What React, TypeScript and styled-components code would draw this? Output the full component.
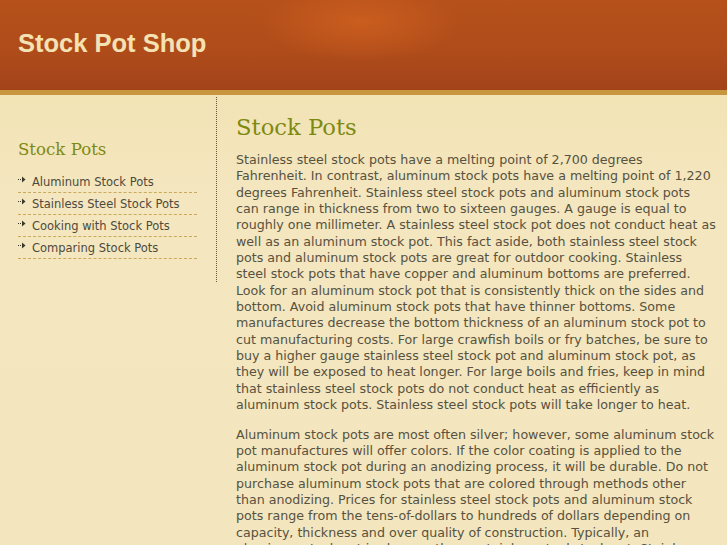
import React from "react";
import styled, { createGlobalStyle } from "styled-components";

const Global = createGlobalStyle`
  html, body { margin: 0; padding: 0; }
  body {
    background: linear-gradient(180deg, #ecd69a 0px, #f2e2b2 60px, #f4e6bf 200px, #f3e5bd 100%);
    font-family: "DejaVu Sans", Verdana, sans-serif;
    min-height: 545px;
  }
`;

const Header = styled.header`
  height: 90px;
  background:
    radial-gradient(ellipse 100px 40px at 360px 22px, rgba(210, 98, 32, 0.75), rgba(210, 98, 32, 0) 100%),
    linear-gradient(180deg, #b6511b 0%, #b04c1a 55%, #a2431a 100%);
  border-bottom: 5px solid #c7963e;
  display: flex;
  align-items: center;
  padding: 0 18px;
  box-sizing: content-box;
`;

const Title = styled.h1`
  margin: 0;
  margin-top: -4px;
  font-family: "Liberation Sans", Arial, sans-serif;
  font-weight: bold;
  font-size: 25.5px;
  color: #f4e2b4;
`;

const Layout = styled.div`
  display: grid;
  grid-template-columns: 217px 1fr;
  align-items: start;
`;

const Sidebar = styled.aside`
  border-right: 1px dotted #6a5a3a;
  padding: 43px 19px 0 18px;
  height: 142px;
  margin-top: 2px;
`;

const SideHeading = styled.h2`
  margin: 0 0 12px 0;
  font-family: "DejaVu Serif", serif;
  font-weight: normal;
  font-size: 16.6px;
  color: #7d8a12;
`;

const NavList = styled.ul`
  list-style: none;
  margin: 0;
  padding: 0;
`;

const NavItem = styled.li`
  display: flex;
  align-items: center;
  gap: 6px;
  height: 21px;
  border-bottom: 1px dashed #c9a95a;
  font-size: 11.5px;
  color: #4e4a3c;
`;

const Arrow = styled.svg`
  width: 8px;
  height: 7px;
  margin-top: -4px;
`;

const Main = styled.main`
  padding: 19px 11px 0 19px;
`;

const MainHeading = styled.h1`
  margin: 0 0 12px 0;
  font-family: "DejaVu Serif", serif;
  font-weight: normal;
  font-size: 22.7px;
  color: #7d8a12;
`;

const Para = styled.p`
  margin: 0 0 13px 0;
  font-size: 12.65px;
  line-height: 16.35px;
  color: #57523f;
`;

const links = [
  "Aluminum Stock Pots",
  "Stainless Steel Stock Pots",
  "Cooking with Stock Pots",
  "Comparing Stock Pots",
];

export default function App() {
  return (
    <>
      <Global />
      <Header>
        <Title>Stock Pot Shop</Title>
      </Header>
      <Layout>
        <Sidebar>
          <SideHeading>Stock Pots</SideHeading>
          <NavList>
            {links.map((l) => (
              <NavItem key={l}>
                <Arrow viewBox="0 0 8 7">
                  <path d="M0 3.5h5" stroke="#3a3a2a" strokeWidth="1" strokeDasharray="1 1" />
                  <path d="M4 0.5L7.5 3.5L4 6.5z" fill="#3a3a2a" />
                </Arrow>
                {l}
              </NavItem>
            ))}
          </NavList>
        </Sidebar>
        <Main>
          <MainHeading>Stock Pots</MainHeading>
          <Para>
            Stainless steel stock pots have a melting point of 2,700 degrees Fahrenheit. In contrast, aluminum stock pots have a melting point of 1,220 degrees Fahrenheit. Stainless steel stock pots and aluminum stock pots can range in thickness from two to sixteen gauges. A gauge is equal to roughly one millimeter. A stainless steel stock pot does not conduct heat as well as an aluminum stock pot. This fact aside, both stainless steel stock pots and aluminum stock pots are great for outdoor cooking. Stainless steel stock pots that have copper and aluminum bottoms are preferred. Look for an aluminum stock pot that is consistently thick on the sides and bottom. Avoid aluminum stock pots that have thinner bottoms. Some manufactures decrease the bottom thickness of an aluminum stock pot to cut manufacturing costs. For large crawfish boils or fry batches, be sure to buy a higher gauge stainless steel stock pot and aluminum stock pot, as they will be exposed to heat longer. For large boils and fries, keep in mind that stainless steel stock pots do not conduct heat as efficiently as aluminum stock pots. Stainless steel stock pots will take longer to heat.
          </Para>
          <Para>
            Aluminum stock pots are most often silver; however, some aluminum stock pot manufactures will offer colors. If the color coating is applied to the aluminum stock pot during an anodizing process, it will be durable. Do not purchase aluminum stock pots that are colored through methods other than anodizing. Prices for stainless steel stock pots and aluminum stock pots range from the tens-of-dollars to hundreds of dollars depending on capacity, thickness and over quality of construction. Typically, an aluminum stock pot is cheaper than a stainless steel stock pot. Stainless steel stock pots are more durable than aluminum stock pots.
          </Para>
        </Main>
      </Layout>
    </>
  );
}
